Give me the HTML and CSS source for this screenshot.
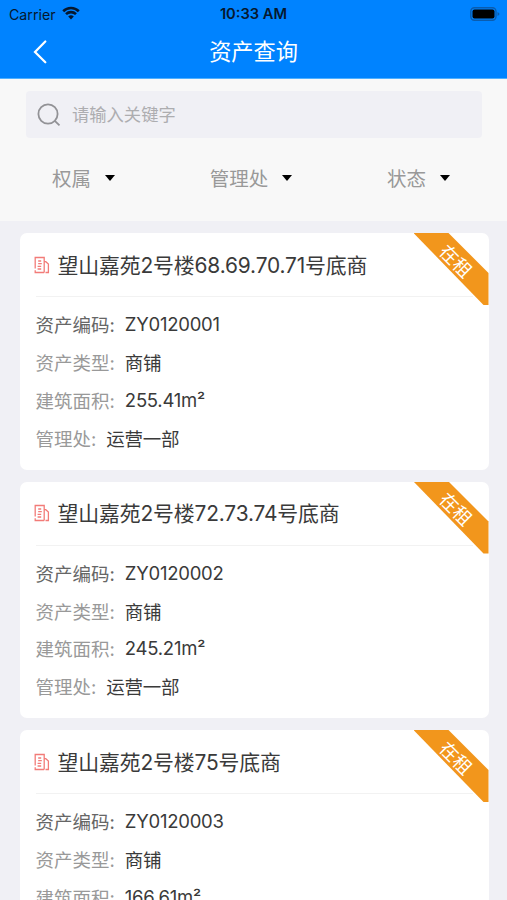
FILE: index.html
```
<!DOCTYPE html>
<html lang="zh-CN">
<head>
  <meta charset="UTF-8" />
  <meta name="viewport" content="width=device-width, initial-scale=1.0" />
  <title>资产查询</title>
  <link rel="stylesheet" href="styles.css">
</head>
<body>
  <svg class="sprite">
    <symbol id="building" viewBox="0 0 16 18">
      <path d="M1.2 12.5V1.5h9v15M1.2 14.3v2.2h9M10.2 5.7h1.6l2.6 2.3v8.5h-2.9" />
      <path d="M4.2 5h3M4.2 7.7h3.6M3.6 10.3h3.6M3.6 13h3.6" />
    </symbol>
  </svg>

  <header class="top">
    <div class="status-bar">
      <div class="carrier">
        <span>Carrier</span>
        <svg class="wifi" viewBox="0 0 18 14">
          <path d="M1.2 5.2a11.2 11.2 0 0 1 15.6 0M4 8.1a7.2 7.2 0 0 1 10 0" />
          <path class="dot" d="M9 13.5l-2.8-3a4 4 0 0 1 5.6 0z" />
        </svg>
      </div>
      <span class="time">10:33 AM</span>
      <svg class="battery" viewBox="0 0 30 14">
        <rect class="shell" x=".8" y=".8" width="25.2" height="12.4" rx="3.6" />
        <rect x="2.5" y="2.5" width="22" height="9" rx="2" />
        <path class="tip" d="M27.5 5v4q2-.8 2-2t-2-2z" />
      </svg>
    </div>
    <div class="nav">
      <svg class="back" viewBox="0 0 14 24">
        <path d="M12.3 1.5L2 12l10.3 10.3" />
      </svg>
      <h1>资产查询</h1>
    </div>
  </header>

  <section class="filters">
    <div class="search">
      <svg viewBox="0 0 24 24">
        <circle cx="11" cy="11" r="9.6" />
        <path d="M17.8 17.8l4.7 4.5" />
      </svg>
      <span>请输入关键字</span>
    </div>
    <div class="selects">
      <div class="select">权属<i class="caret"></i></div>
      <div class="select">管理处<i class="caret"></i></div>
      <div class="select">状态<i class="caret"></i></div>
    </div>
  </section>

  <main class="list">
    <article class="card">
      <div class="ribbon"><span>在租</span></div>
      <h2><svg><use href="#building" /></svg><span>望山嘉苑2号楼68.69.70.71号底商</span></h2>
      <dl>
        <div class="row code"><dt>资产编码:</dt><dd>ZY0120001</dd></div>
        <div class="row"><dt>资产类型:</dt><dd>商铺</dd></div>
        <div class="row"><dt>建筑面积:</dt><dd>255.41m²</dd></div>
        <div class="row"><dt>管理处:</dt><dd>运营一部</dd></div>
      </dl>
    </article>

    <article class="card">
      <div class="ribbon"><span>在租</span></div>
      <h2><svg><use href="#building" /></svg><span>望山嘉苑2号楼72.73.74号底商</span></h2>
      <dl>
        <div class="row code"><dt>资产编码:</dt><dd>ZY0120002</dd></div>
        <div class="row"><dt>资产类型:</dt><dd>商铺</dd></div>
        <div class="row"><dt>建筑面积:</dt><dd>245.21m²</dd></div>
        <div class="row"><dt>管理处:</dt><dd>运营一部</dd></div>
      </dl>
    </article>

    <article class="card">
      <div class="ribbon"><span>在租</span></div>
      <h2><svg><use href="#building" /></svg><span>望山嘉苑2号楼75号底商</span></h2>
      <dl>
        <div class="row code"><dt>资产编码:</dt><dd>ZY0120003</dd></div>
        <div class="row"><dt>资产类型:</dt><dd>商铺</dd></div>
        <div class="row"><dt>建筑面积:</dt><dd>166.61m²</dd></div>
        <div class="row"><dt>管理处:</dt><dd>运营一部</dd></div>
      </dl>
    </article>
  </main>
</body>
</html>
```
FILE: styles.css
```
* {
  margin: 0;
  padding: 0;
  box-sizing: border-box;
}

html, body {
  height: 100%;
  overflow: hidden;
}

body {
  font-family: Inter, "Noto Sans CJK SC", sans-serif;
  background-color: #f0f0f5;
  color: #3a3a3a;
}

svg {
  display: block;
  flex: none;
  fill: none;
}

.sprite {
  width: 0;
  height: 0;
  position: absolute;
}

/* header */
.top {
  height: 79px;
  background-color: #0083ff;
  border-bottom: 1px solid #4fb0ff;
}

.status-bar {
  height: 27px;
  padding: 0 9px;
  display: grid;
  grid-template-columns: 1fr auto 1fr;
  align-items: center;
  font-size: 14.2px;
  line-height: 27px;
  color: #06182e;
}

.carrier {
  display: flex;
  align-items: center;
  gap: 6px;
}

.wifi {
  width: 18px;
  height: 14px;
  margin-top: -2px;
  stroke: #06182e;
  stroke-width: 2.6;
}

.wifi .dot {
  fill: #06182e;
  stroke: none;
}

.time {
  padding-top: 1px;
  font-size: 14.7px;
  font-weight: 600;
}

.battery {
  width: 30px;
  height: 14px;
  margin-right: -2px;
  justify-self: end;
  fill: #000;
}

.battery .shell {
  fill: none;
  stroke: #0a5cae;
  stroke-width: 1.4;
}

.battery .tip {
  fill: #0a5cae;
}

.nav {
  height: 50px;
  padding: 0 33px;
  display: grid;
  grid-template-columns: 1fr auto 1fr;
  align-items: center;
}

.back {
  width: 14px;
  height: 24px;
  stroke: #fff;
  stroke-width: 2.2;
  stroke-linecap: round;
}

.nav h1 {
  font-size: 22.2px;
  font-weight: 400;
  line-height: 30px;
  color: #fff;
}

/* search and filters */
.filters {
  height: 142px;
  padding: 12px 25px 0 26px;
  background-color: #f8f8f8;
}

.search {
  height: 47px;
  padding-left: 11px;
  display: flex;
  align-items: center;
  gap: 11px;
  border-radius: 4px;
  background-color: #f0f0f5;
  font-size: 17.3px;
  line-height: 26px;
  color: #adadb0;
}

.search span {
  margin-top: 1px;
}

.search svg {
  width: 24px;
  height: 24px;
  stroke: #929296;
  stroke-width: 1.8;
}

.selects {
  padding: 26px 32px 0 26px;
  display: flex;
  justify-content: space-between;
}

.select {
  display: flex;
  align-items: center;
  font-size: 19.5px;
  line-height: 30px;
  color: #999;
}

.caret {
  margin: -2px 0 0 14px;
  border: 5.5px solid transparent;
  border-top: 6px solid #000;
  border-bottom: 0;
}

/* cards */
.list {
  padding: 12px 18.5px 0 19.5px;
  display: flex;
  flex-direction: column;
  gap: 12px;
}

.card {
  flex: none;
  height: 236.5px;
  padding: 0 16px;
  position: relative;
  overflow: hidden;
  border-radius: 7px;
  background-color: #fff;
}

.card h2 {
  height: 64px;
  display: flex;
  align-items: center;
  gap: 7.5px;
  border-bottom: 1px solid #f2f2f2;
  font-size: 20.9px;
  font-weight: 400;
  letter-spacing: -.15px;
  white-space: nowrap;
}

.card h2 span {
  margin-top: -2px;
}

.card h2 svg {
  width: 16px;
  height: 18px;
  margin-left: -1.5px;
  stroke: #f27b78;
  stroke-width: 1.3;
}

.card dl {
  padding-top: 8.5px;
}

.row {
  height: 37.8px;
  display: flex;
  align-items: center;
  gap: 10px;
  font-size: 18.5px;
}

.row dt {
  color: #999;
}

.row.code dt {
  color: #666;
}

.row dd {
  letter-spacing: -.25px;
}

.ribbon {
  width: 75px;
  height: 72px;
  position: absolute;
  top: 0;
  right: 0;
  background-color: #f2961c;
  clip-path: polygon(0 0, 35px 0, 75px 40px, 75px 72px, 70px 72px);
}

.ribbon span {
  display: block;
  width: 60px;
  margin: 14.5px 0 0 12.5px;
  font-size: 18.5px;
  line-height: 26px;
  text-align: center;
  color: #fff;
  transform: rotate(45deg);
}
```
